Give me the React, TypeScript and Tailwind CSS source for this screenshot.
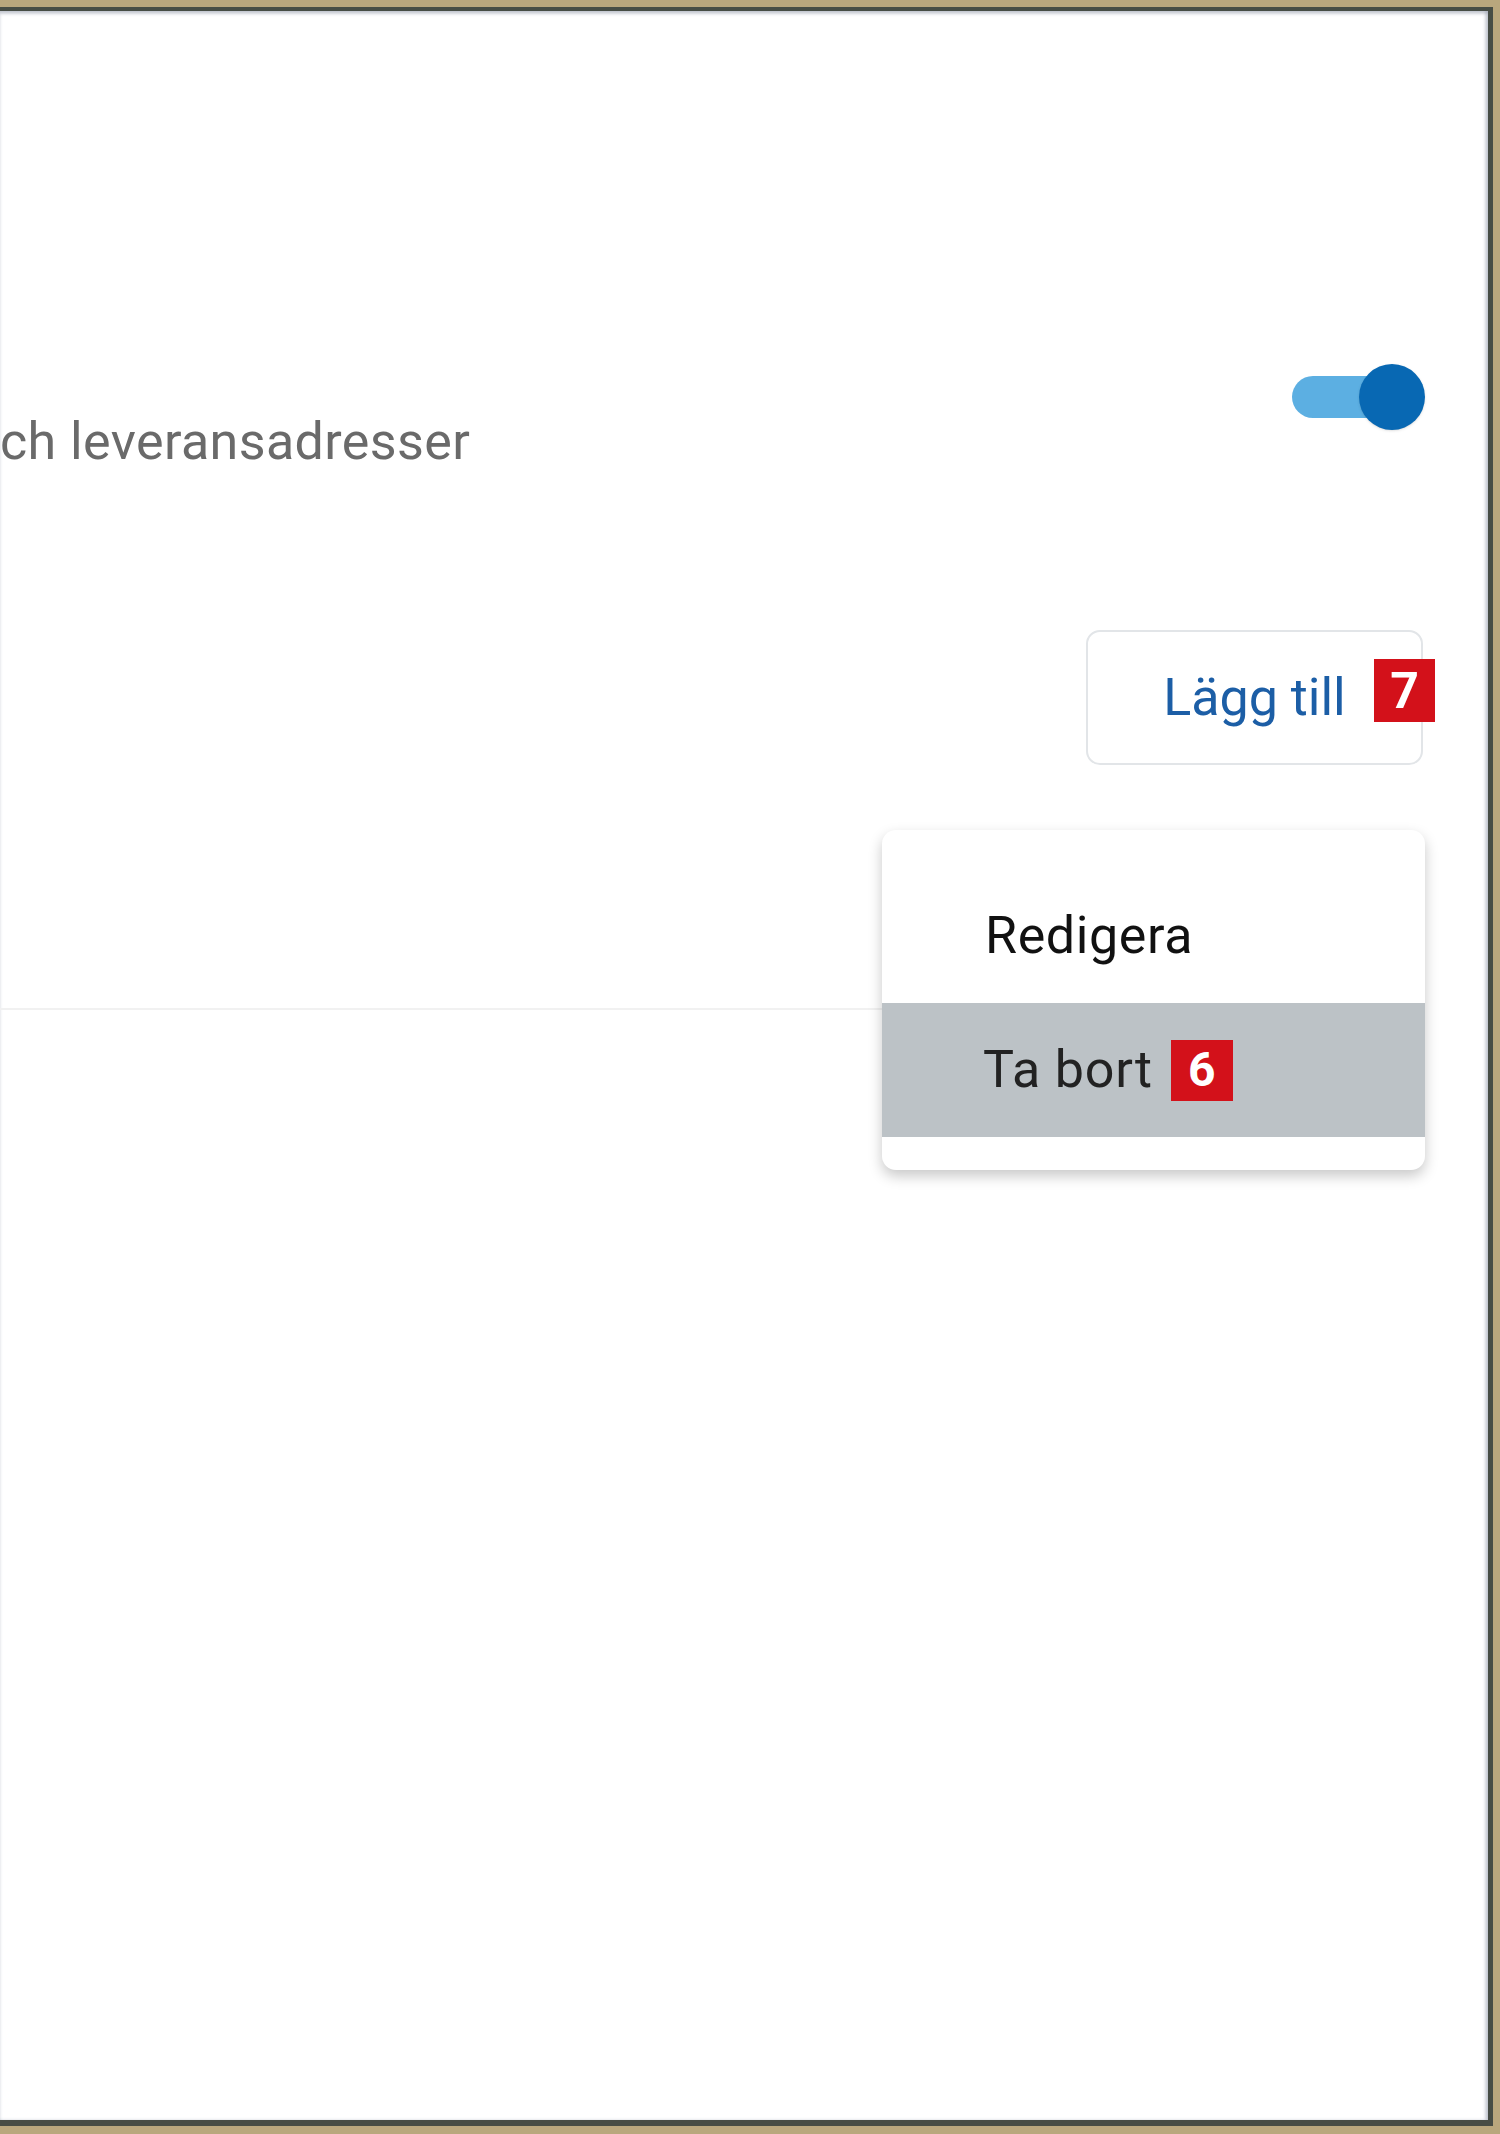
import { useState } from "react";

const Badge = ({ n, className = "" }: { n: number; className?: string }) => (
  <span
    className={`inline-flex items-center justify-center bg-[#d3111a] text-white font-bold leading-none tracking-normal ${className}`}
  >
    {n}
  </span>
);

const Toggle = ({ on }: { on: boolean }) => (
  <div className="relative w-[133px] h-[66px] shrink-0">
    <div className="absolute left-0 top-[12px] w-[118px] h-[42px] rounded-full bg-[#5cafe2]" />
    <div
      className={`absolute top-0 w-[66px] h-[66px] rounded-full bg-[#0868b3] shadow-sm ${
        on ? "right-0" : "left-0"
      }`}
    />
  </div>
);

export default function App() {
  const [on] = useState(true);

  return (
    <div
      className="w-[1500px] h-[2134px] bg-[#b9a77d] pt-[7px] pr-[7px] pb-[8px] flex flex-col"
      style={{ fontFamily: "Roboto, 'Noto Sans', sans-serif" }}
    >
      <div className="flex-1 bg-white border-t-[4px] border-r-[5px] border-b-[6px] border-[#474d45] shadow-[inset_0_3px_3px_rgba(120,130,150,0.35),inset_-3px_0_3px_rgba(120,130,150,0.35)] overflow-hidden pr-[63px]">
        {/* Inställning med växel */}
        <div className="flex justify-between items-start pt-[353px]">
          <p className="mt-[52px] text-[52px] leading-[52px] tracking-[0.4px] text-[#6a6a6a] whitespace-nowrap">
            ch leveransadresser
          </p>
          <Toggle on={on} />
        </div>

        {/* Lägg till */}
        <div className="flex justify-end mt-[162px] pr-[2px]">
          <button className="relative w-[337px] h-[135px] rounded-[14px] border-2 border-[#e2e5e8] bg-white flex items-center justify-center text-[52px] text-[#1c5ea6]">
            Lägg till
            <Badge n={7} className="absolute left-[286px] top-[27px] w-[61px] h-[63px] text-[50px]" />
          </button>
        </div>

        {/* Lista med meny */}
        <div className="relative h-[245px] border-b-2 border-[#f1f1f1]">
          <div className="absolute right-0 top-[65px] w-[543px] bg-white rounded-[14px] shadow-[0_6px_14px_rgba(0,0,0,0.22)] pt-[39px] pb-[33px] overflow-hidden z-10">
            <div className="h-[134px] pl-[103px] flex items-center text-[52px] tracking-[0.6px] text-[#111]">
              Redigera
            </div>
            <div className="h-[134px] pl-[101px] flex items-center text-[52px] tracking-[0.8px] text-[#222] bg-[#bcc2c6]">
              Ta bort
              <Badge n={6} className="ml-[18px] w-[62px] h-[61px] text-[48px]" />
            </div>
          </div>
        </div>
      </div>
    </div>
  );
}
